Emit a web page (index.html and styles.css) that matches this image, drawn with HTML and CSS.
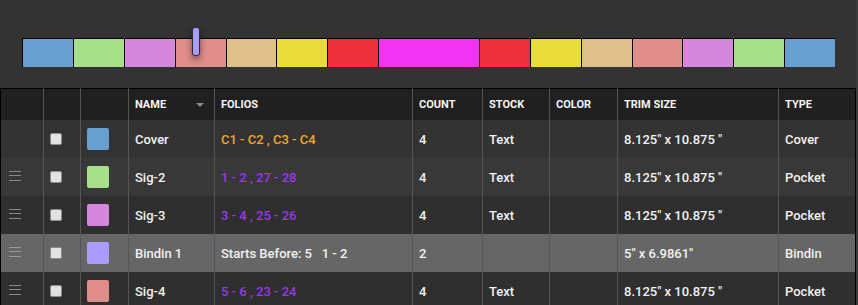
FILE: index.html
```html
<!DOCTYPE html>
<html lang="en">
<head>
    <meta charset="UTF-8">
    <meta name="viewport" content="width=device-width, initial-scale=1.0">
    <title>Signatures</title>
    <link rel="stylesheet" href="styles.css">
</head>
<body>

<div class="page">
    <div class="strip-wrap">
        <div class="strip">
            <div class="seg c-blue"></div>
            <div class="seg c-green"></div>
            <div class="seg c-violet"></div>
            <div class="seg c-salmon"></div>
            <div class="seg c-tan"></div>
            <div class="seg c-yellow"></div>
            <div class="seg c-red"></div>
            <div class="seg wide c-magenta"></div>
            <div class="seg c-red"></div>
            <div class="seg c-yellow"></div>
            <div class="seg c-tan"></div>
            <div class="seg c-salmon"></div>
            <div class="seg c-violet"></div>
            <div class="seg c-green"></div>
            <div class="seg c-blue"></div>
        </div>
        <div class="marker"></div>
    </div>

    <table class="sigs">
        <colgroup>
            <col style="width:43px">
            <col style="width:37px">
            <col style="width:48px">
            <col style="width:86px">
            <col style="width:198px">
            <col style="width:70px">
            <col style="width:67px">
            <col style="width:68px">
            <col style="width:161px">
            <col>
        </colgroup>
        <thead>
            <tr>
                <th></th>
                <th></th>
                <th></th>
                <th><div class="sortable">Name <span class="sort-arrow"></span></div></th>
                <th>Folios</th>
                <th>Count</th>
                <th>Stock</th>
                <th>Color</th>
                <th>Trim Size</th>
                <th>Type</th>
            </tr>
        </thead>
        <tbody>
            <tr class="row-a">
                <td></td>
                <td><span class="check"></span></td>
                <td><span class="swatch c-blue"></span></td>
                <td>Cover</td>
                <td class="folios orange">C1 - C2 , C3 - C4</td>
                <td>4</td>
                <td>Text</td>
                <td></td>
                <td>8.125" x 10.875 "</td>
                <td>Cover</td>
            </tr>
            <tr class="row-b">
                <td><span class="handle"></span></td>
                <td><span class="check"></span></td>
                <td><span class="swatch c-green"></span></td>
                <td>Sig-2</td>
                <td class="folios purple">1 - 2 , 27 - 28</td>
                <td>4</td>
                <td>Text</td>
                <td></td>
                <td>8.125" x 10.875 "</td>
                <td>Pocket</td>
            </tr>
            <tr class="row-c">
                <td><span class="handle"></span></td>
                <td><span class="check"></span></td>
                <td><span class="swatch c-violet"></span></td>
                <td>Sig-3</td>
                <td class="folios purple">3 - 4 , 25 - 26</td>
                <td>4</td>
                <td>Text</td>
                <td></td>
                <td>8.125" x 10.875 "</td>
                <td>Pocket</td>
            </tr>
            <tr class="row-selected">
                <td><span class="handle"></span></td>
                <td><span class="check"></span></td>
                <td><span class="swatch c-lavender"></span></td>
                <td>Bindin 1</td>
                <td>Starts Before: 5&nbsp;&nbsp;&nbsp;1 - 2</td>
                <td>2</td>
                <td></td>
                <td></td>
                <td>5" x 6.9861"</td>
                <td>Bindin</td>
            </tr>
            <tr class="row-c">
                <td><span class="handle"></span></td>
                <td><span class="check"></span></td>
                <td><span class="swatch c-salmon"></span></td>
                <td>Sig-4</td>
                <td class="folios purple">5 - 6 , 23 - 24</td>
                <td>4</td>
                <td>Text</td>
                <td></td>
                <td>8.125" x 10.875 "</td>
                <td>Pocket</td>
            </tr>
        </tbody>
    </table>
</div>

</body>
</html>
```

FILE: styles.css
```css
body {
    margin: 0;
    padding: 0;
    background-color: #333;
    font-family: Roboto, "Liberation Sans", Arial, sans-serif;
    color: #f2f2f2;
    overflow: hidden;
}
.page {
    width: 856px;
    height: 305px;
    border-right: 2px solid #3a3a3a;
}

/* color strip */
.strip-wrap {
    position: relative;
    padding: 38px 0 0 22px;
    height: 50px;
}
.strip {
    display: flex;
    width: 813px;
    height: 28px;
    border-top: 1px solid #000;
}
.seg {
    width: 50px;
    height: 28px;
    border-left: 1px solid #000;
}
.seg.wide {
    width: 100px;
}
.marker {
    position: absolute;
    left: 192px;
    top: 27px;
    width: 6px;
    height: 27px;
    background-color: #a99cf6;
    border: 1px solid #2a2a3a;
    border-radius: 3px;
    box-shadow: 0 3px 6px rgba(0, 0, 0, 0.5);
}

.c-blue { background-color: #679fd0; }
.c-green { background-color: #a8df8a; }
.c-violet { background-color: #d488dd; }
.c-salmon { background-color: #df8e8a; }
.c-tan { background-color: #ddc08c; }
.c-yellow { background-color: #e8dd38; }
.c-red { background-color: #ee2f3d; }
.c-magenta { background-color: #f233f2; }
.c-lavender { background-color: #aa9cff; }

/* table */
.sigs {
    width: 856px;
    table-layout: fixed;
    border-collapse: collapse;
    border: 1px solid #000;
}
.sigs th, .sigs td {
    border-left: 1px solid #555;
    padding: 0 6px;
    text-align: left;
    white-space: nowrap;
    overflow: hidden;
}
.sigs th:first-child, .sigs td:first-child {
    border-left: 1px solid #000;
}
.sigs th {
    height: 31px;
    background-color: #202020;
    font-size: 11px;
    font-weight: 700;
    text-transform: uppercase;
    color: #f4f4f4;
}
.sigs td {
    height: 38px;
    font-size: 13px;
    font-weight: 500;
}
.sortable {
    display: flex;
    align-items: center;
    justify-content: space-between;
    padding-right: 4px;
}
.sort-arrow {
    width: 0;
    height: 0;
    border-left: 4px solid transparent;
    border-right: 4px solid transparent;
    border-top: 4px solid #888;
}

.row-a { background-color: #333; }
.row-b { background-color: #383838; }
.row-c { background-color: #2f2f2f; }
.row-selected { background-color: #666; }

.folios {
    font-weight: 400;
}
.orange { color: #f5a623; }
.purple { color: #9b35ee; }

.handle {
    display: block;
    width: 12px;
    height: 8px;
    margin: -2px 0 0 2px;
    border-top: 1px solid #8a8a8a;
    border-bottom: 1px solid #8a8a8a;
    position: relative;
}
.handle::after {
    content: "";
    position: absolute;
    left: 0;
    right: 0;
    top: 3px;
    border-top: 1px solid #8a8a8a;
}
.row-selected .handle, .row-selected .handle::after {
    border-color: #999;
}
.check {
    display: block;
    width: 10px;
    height: 10px;
    background-color: #e2e2e2;
    border: 1px solid #8c8c8c;
    border-radius: 2px;
    margin-top: -1px;
}
.swatch {
    display: block;
    width: 22px;
    height: 22px;
    border-radius: 2px;
}
```
